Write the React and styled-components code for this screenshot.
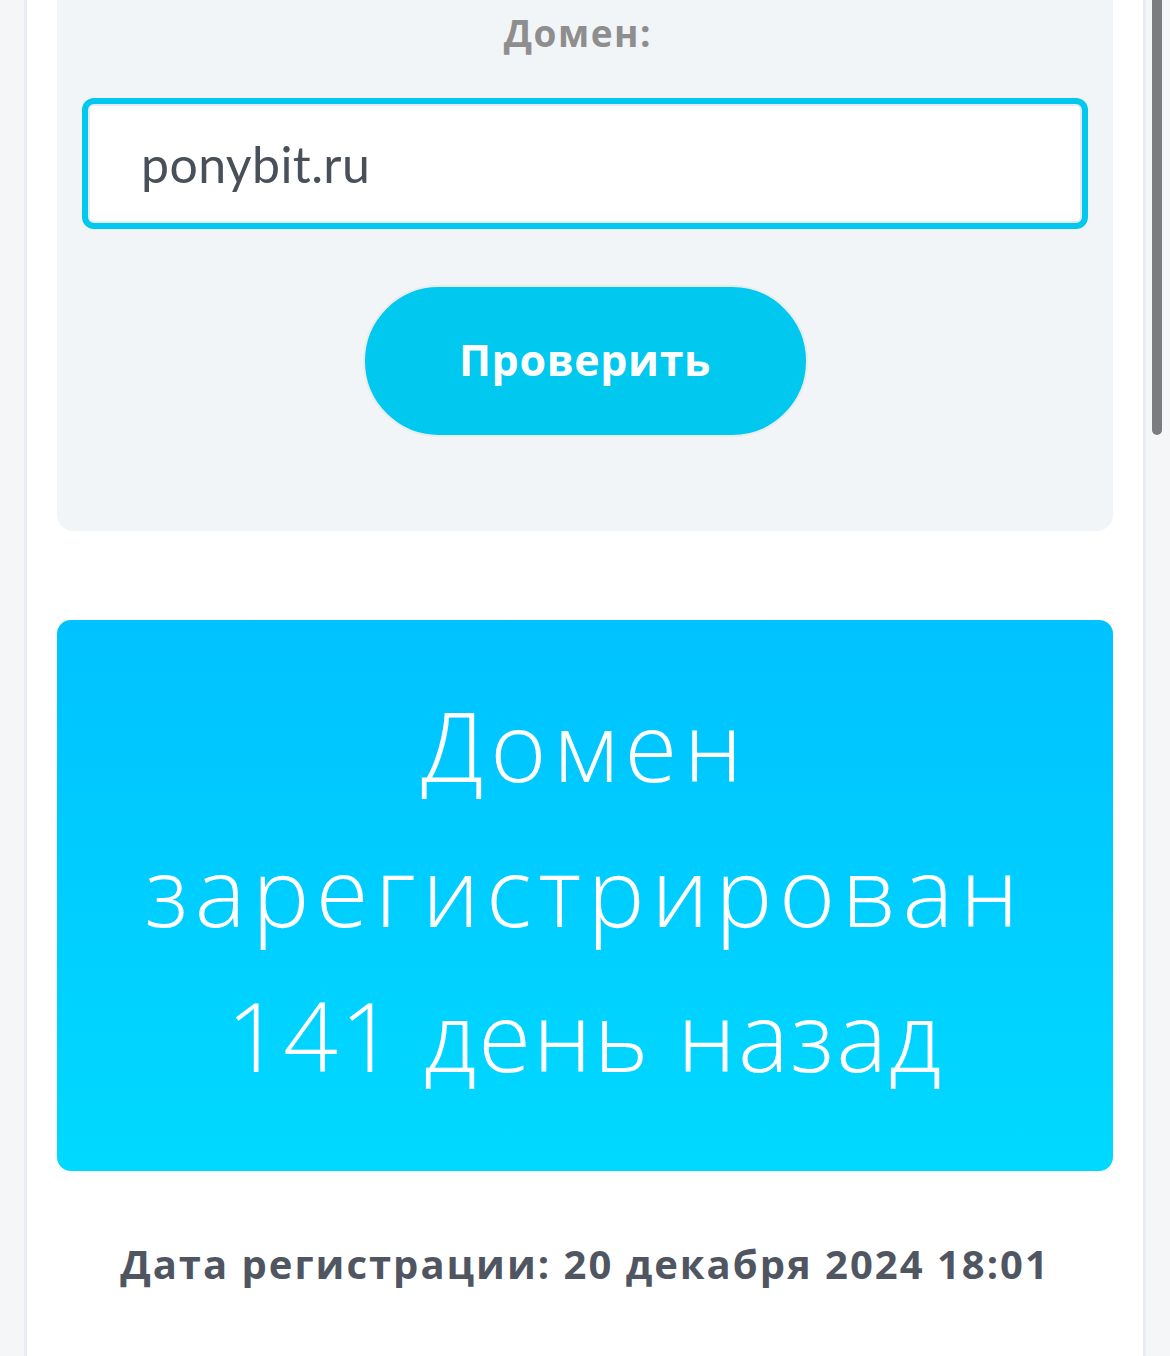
import React from 'react';
import styled, { createGlobalStyle } from 'styled-components';

const GlobalStyle = createGlobalStyle`
  html, body {
    margin: 0;
    padding: 0;
    background: #f4f6f8;
  }
  * {
    box-sizing: border-box;
  }
`;

function App() {
  return (
    <>
      <GlobalStyle />
      <Page>
        <Column>
          <CheckCard>
            <Label>Домен:</Label>
            <DomainInput defaultValue="ponybit.ru" />
            <CheckButton>Проверить</CheckButton>
          </CheckCard>

          <ResultBox>
            <ResultText>
              Домен
              <br />
              зарегистрирован
              <br />
              <Narrow>141 день назад</Narrow>
            </ResultText>
          </ResultBox>

          <RegDate>Дата регистрации: 20 декабря 2024 18:01</RegDate>
        </Column>
        <ScrollThumb />
      </Page>
    </>
  );
}

const Page = styled.div`
  position: relative;
  width: 1170px;
  min-height: 1356px;
  padding-left: 24px;
  padding-right: 24px;
  overflow: hidden;
`;

const Column = styled.div`
  display: flex;
  flex-direction: column;
  min-height: 1356px;
  background: #fff;
  border-left: 3px solid #e9edf1;
  border-right: 3px solid #e9edf1;
  padding: 0 30px;
`;

const CheckCard = styled.div`
  display: flex;
  flex-direction: column;
  align-items: center;
  background: #f2f5f7;
  border-radius: 0 0 16px 16px;
  padding: 8px 31px 94px;
`;

const Label = styled.div`
  font-family: "Open Sans", "Liberation Sans", sans-serif;
  font-weight: 700;
  font-size: 37px;
  letter-spacing: 1.5px;
  line-height: 50px;
  color: #8e8e8e;
  margin-right: 14px;
`;

const DomainInput = styled.input`
  width: 100%;
  height: 119px;
  margin-top: 46px;
  border: 2px solid #e7ebee;
  border-radius: 6px;
  box-shadow: 0 0 0 6px #00c8ee;
  background: #fff;
  padding: 0 0 0 51px;
  font-family: Lato, "Open Sans", sans-serif;
  font-size: 50px;
  letter-spacing: 0.4px;
  color: #4a5059;
  outline: none;
`;

const CheckButton = styled.button`
  width: 445px;
  height: 152px;
  margin-top: 62px;
  padding-bottom: 4px;
  border: 2px solid #e8ecef;
  border-radius: 76px;
  background: #00c8ee;
  color: #fff;
  font-family: "Open Sans", "Liberation Sans", sans-serif;
  font-weight: 700;
  font-size: 43px;
  letter-spacing: 0.6px;
  cursor: pointer;
`;

const ResultBox = styled.div`
  margin-top: 89px;
  height: 551px;
  border-radius: 14px;
  background: linear-gradient(180deg, #00c2ff 0%, #00d9ff 100%);
  padding-top: 52px;
`;

const ResultText = styled.div`
  font-family: "Open Sans", Lato, sans-serif;
  font-weight: 300;
  font-size: 96px;
  letter-spacing: 6.5px;
  line-height: 145px;
  color: #fff;
  text-align: center;
`;

const Narrow = styled.span`
  letter-spacing: 2px;
`;

const RegDate = styled.div`
  margin-top: 68px;
  font-family: "Open Sans", "Liberation Sans", sans-serif;
  font-weight: 700;
  font-size: 40px;
  letter-spacing: 2px;
  line-height: 50px;
  color: #4f5661;
  text-align: center;
`;

const ScrollThumb = styled.div`
  position: absolute;
  top: -10px;
  left: 1152px;
  width: 10px;
  height: 445px;
  border-radius: 5px;
  background: #7b7c80;
`;

export default App;
